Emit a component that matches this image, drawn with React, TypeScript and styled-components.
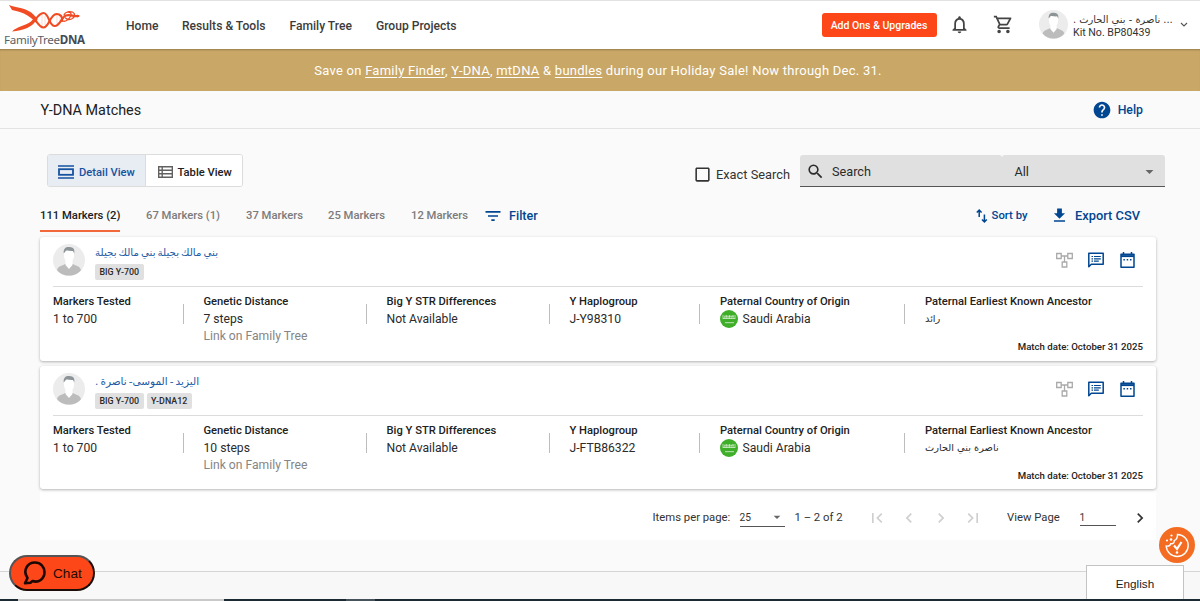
import React from "react";
import styled, { createGlobalStyle } from "styled-components";
import {
  MdNotificationsNone,
  MdOutlineShoppingCart,
  MdHelp,
  MdFilterList,
  MdGetApp,
  MdSearch,
  MdCheckBoxOutlineBlank,
  MdArrowDropDown,
  MdFirstPage,
  MdLastPage,
  MdChevronLeft,
  MdChevronRight,
} from "react-icons/md";

const blue = "#004691";

const GlobalStyle = createGlobalStyle`
  * { box-sizing: border-box; }
  body {
    margin: 0;
    background: #fafafa;
    font-family: Roboto, "DejaVu Sans", sans-serif;
    color: #212121;
    overflow: hidden;
  }
  svg { display: block; flex: none; }
`;

const Page = styled.div`
  height: 601px;
  display: flex;
  flex-direction: column;
  overflow: hidden;
  white-space: nowrap;
`;

const Header = styled.header`
  height: 49px;
  flex: none;
  display: flex;
  align-items: center;
  padding-bottom: 1px;
  background: #fff;
  border-top: 1px solid #e2e2e2;
`;

const Logo = styled.div`
  width: 126px;
  height: 46px;
  padding-left: 4px;
  display: flex;
  flex-direction: column;
`;

const LogoText = styled.div`
  font: 400 11.6px/14px "Noto Sans", sans-serif;
  letter-spacing: -0.3px;
  color: #5a5f66;
  margin-top: -2px;
  b { font-weight: 700; color: #454b55; }
`;

const Nav = styled.nav`
  display: flex;
  flex: 1;
  padding-top: 2px;
`;

const NavItem = styled.a<{ $w: number }>`
  width: ${(p) => p.$w}px;
  font-size: 12.1px;
  font-weight: 500;
  color: #3c3c3c;
`;

const UpgradeButton = styled.button`
  width: 115px;
  height: 24px;
  padding: 1px 0 0;
  border: 0;
  border-radius: 3px;
  background: #fd4719;
  color: #fff;
  font: 500 10.5px Roboto, sans-serif;
`;

const HeaderIcon = styled.span<{ $ml: number }>`
  display: flex;
  margin-left: ${(p) => p.$ml}px;
  color: #444;
`;

const Account = styled.div`
  display: flex;
  align-items: center;
  margin-left: 25px;
  width: 161px;
`;

const AccountText = styled.div`
  width: 98px;
  margin-left: 5px;
  margin-top: 2px;
  font-size: 10.6px;
  line-height: 12px;
  color: #333;
`;

const Arabic = styled.div<{ $size: number; $color?: string; $tight?: number }>`
  direction: rtl;
  width: max-content;
  font-family: "DejaVu Sans", sans-serif;
  font-size: ${(p) => p.$size}px;
  word-spacing: ${(p) => -(p.$tight || 0)}px;
  line-height: 14px;
  color: ${(p) => p.$color || "inherit"};
`;

const Banner = styled.div`
  height: 42px;
  flex: none;
  display: flex;
  align-items: center;
  justify-content: center;
  background: #c9a767;
  box-shadow: inset 0 2px 2px -1px rgba(0, 0, 0, 0.25);
  color: #fff;
  font-size: 13px;
  letter-spacing: 0.25px;
  padding: 0 4px 0 0;
  a { text-decoration: underline; text-underline-offset: 2px; }
`;

const TitleBar = styled.div`
  height: 38px;
  flex: none;
  display: flex;
  align-items: center;
  justify-content: space-between;
  padding: 0 57px 0 40.5px;
  border-bottom: 1px solid #e3e3e3;
`;

const Title = styled.h1`
  margin: 0;
  padding-top: 1px;
  font-size: 14.4px;
  font-weight: 400;
`;

const Help = styled.a`
  display: flex;
  align-items: center;
  gap: 6px;
  font-size: 12.3px;
  font-weight: 500;
  color: ${blue};
`;

const Main = styled.main`
  height: 442px;
  flex: none;
  padding: 26px 44px 0 40px;
`;

const Toolbar = styled.div`
  display: flex;
  align-items: flex-start;
  padding-left: 7px;
`;

const Toggle = styled.div`
  display: flex;
  width: 196px;
  height: 33px;
  margin-top: -1px;
  border: 1px solid #dcdcdc;
  border-radius: 3px;
  overflow: hidden;
`;

const ToggleButton = styled.div<{ $on?: boolean }>`
  width: ${(p) => (p.$on ? 98 : 96)}px;
  display: flex;
  align-items: center;
  gap: 5px;
  padding: 3px 0 0 ${(p) => (p.$on ? 10 : 11.5)}px;
  border-right: ${(p) => (p.$on ? "1px solid #dcdcdc" : "0")};
  background: ${(p) => (p.$on ? "#e8ecf3" : "#fff")};
  color: ${(p) => (p.$on ? "#1553a0" : "#212121")};
  font-size: 11.2px;
  font-weight: 500;
`;

const ExactSearch = styled.label`
  display: flex;
  align-items: center;
  gap: 4px;
  height: 38px;
  margin-left: 450px;
  width: 107px;
  font-size: 12.8px;
  color: #333;
`;

const SearchBox = styled.div`
  display: flex;
  width: 365px;
  height: 32px;
  margin-right: -9px;
  border-bottom: 1px solid #555;
  font-size: 12.7px;
  color: #2b2b2b;
`;

const SearchField = styled.div<{ $w: number }>`
  width: ${(p) => p.$w}px;
  display: flex;
  align-items: center;
  background: #e0e0e0;
  border-radius: 3px 3px 0 0;
  padding: 2px 6px 0 ${(p) => (p.$w > 180 ? 6 : 12.5)}px;
  gap: 7px;
  justify-content: ${(p) => (p.$w > 180 ? "flex-start" : "space-between")};
`;

const TabBar = styled.div`
  display: flex;
  height: 39px;
  margin-bottom: 5px;
  padding-top: 8px;
`;

const Tab = styled.div<{ $w: number; $active?: boolean }>`
  width: ${(p) => p.$w}px;
  height: 31px;
  padding-top: 8px;
  margin-right: 26px;
  font-size: 11.25px;
  line-height: 14px;
  font-weight: 500;
  color: ${(p) => (p.$active ? "#212121" : "#7c7c7c")};
  border-bottom: 2px solid ${(p) => (p.$active ? "#f2693c" : "transparent")};
`;

const Action = styled.div<{ $ml: number; $gap: number; $size: number }>`
  display: flex;
  align-items: center;
  height: 29px;
  gap: ${(p) => p.$gap}px;
  margin-left: ${(p) => p.$ml}px;
  font-size: ${(p) => p.$size}px;
  font-weight: 500;
  color: ${blue};
`;

const TabActions = styled.div`
  display: flex;
  margin-left: auto;
  margin-right: 16px;
`;

const Card = styled.article`
  position: relative;
  height: 124px;
  margin-bottom: 5px;
  padding: 0 13px;
  background: #fff;
  border-radius: 3px;
  box-shadow: 0 1px 3px rgba(0, 0, 0, 0.3);
  &:last-of-type { height: 123px; margin-bottom: 0; }
`;

const CardHead = styled.div`
  display: flex;
  height: 50px;
  padding-top: 7px;
  border-bottom: 1px solid #dcdcdc;
`;

const Person = styled.div`
  flex: 1;
  margin-left: 10px;
  padding-top: 1px;
`;

const Badges = styled.div`
  display: flex;
  gap: 3px;
  margin-top: 5px;
`;

const Badge = styled.span`
  height: 16px;
  padding: 0 4.5px;
  border-radius: 2px;
  background: #e0e0e0;
  font-size: 8.9px;
  line-height: 16px;
  font-weight: 500;
  color: #2a2a2a;
`;

const CardIcons = styled.div`
  display: flex;
  align-items: center;
  gap: 15px;
  height: 32px;
  margin-right: 8px;
`;

const Facts = styled.div`
  display: flex;
  height: 50px;
`;

const Fact = styled.dl<{ $w: number }>`
  width: ${(p) => p.$w}px;
  flex: none;
  margin: 0;
  padding-top: 6px;
  display: flex;
  justify-content: space-between;
`;

const Term = styled.dt`
  font-size: 11.2px;
  line-height: 17px;
  font-weight: 500;
`;

const Value = styled.dd<{ $muted?: boolean }>`
  margin: 0;
  height: ${(p) => (p.$muted ? 16 : 18)}px;
  display: flex;
  align-items: center;
  gap: 4.5px;
  font-size: 12.15px;
  color: ${(p) => (p.$muted ? "#858585" : "#2b2b2b")};
`;

const Separator = styled.i`
  width: 1px;
  height: 20px;
  margin: 11px 20px 0 0;
  background: #bdbdbd;
`;

const MatchDate = styled.div`
  text-align: right;
  font-size: 9.65px;
  line-height: 14px;
  font-weight: 500;
  margin-top: 3px;
`;

const Paginator = styled.div`
  display: flex;
  align-items: center;
  height: 51px;
  padding: 6px 0 0 612.5px;
  background: #fff;
  font-size: 11.3px;
  color: #333;
`;

const Cell = styled.div<{ $w: number }>`
  width: ${(p) => p.$w}px;
  flex: none;
`;

const Field = styled.div<{ $w: number; $h: number }>`
  width: ${(p) => p.$w}px;
  height: ${(p) => p.$h}px;
  flex: none;
  display: flex;
  align-items: center;
  justify-content: space-between;
  border-bottom: 1px solid #555;
  font-size: 10.2px;
`;

const PageButtons = styled.div`
  display: flex;
  gap: 12px;
  width: 140px;
  color: #cfcfcf;
`;

const Footer = styled.footer`
  height: 28px;
  flex: none;
  background: #f8f8f8;
  border-top: 1px solid #d6d6d6;
`;

const Taskbar = styled.div`
  display: flex;
  height: 2px;
  background: #1c2b33;
`;

const TaskSegment = styled.i<{ $w: number; $bg: string }>`
  width: ${(p) => p.$w}px;
  background: ${(p) => p.$bg};
`;

const ChatButton = styled.button`
  position: fixed;
  left: 9px;
  top: 555px;
  width: 86px;
  height: 36px;
  padding: 0 0 0 12px;
  display: flex;
  align-items: center;
  gap: 7px;
  border: 2px solid #1c0d08;
  border-top-color: #555;
  border-left-color: #555;
  border-radius: 18px;
  background: #fd4719;
  color: #260a02;
  font: 13.6px "Liberation Sans", Arial, sans-serif;
`;

const Language = styled.div`
  position: fixed;
  left: 1086px;
  top: 565px;
  width: 98px;
  height: 34px;
  padding-top: 1px;
  display: flex;
  align-items: center;
  justify-content: center;
  background: #fff;
  border: 1px solid #c4c4c4;
  border-bottom: 0;
  font: 11.7px "Liberation Sans", Arial, sans-serif;
`;

const CookieButton = styled.div`
  position: fixed;
  left: 1159px;
  top: 527px;
  width: 36px;
  height: 36px;
  border-radius: 50%;
  background: #f36c21;
`;

const Helix = () => (
  <svg width="82" height="33" viewBox="4 1 82 33">
    <g fill="none" stroke="#f04b23" strokeLinecap="round">
      <path d="M32 14.500c4 4.500 7 12 11.500 12C49 26.500 50 13.500 56.500 13c4 0 6.500 3 5.500 7" strokeWidth="2.100" />
      <path d="M35 19c2.500-3.500 5-7 8.500-7 5.500 0 5 12.500 11 13 5.500.3 6.500-8.500 11.500-10.500 4-1.500 8 1.500 12.500.5" strokeWidth="2.100" />
      <path d="M62.500 20c3 1 6-1.500 8-4.500 1.500-3 0-4.500-2.500-4.500M64 14c1-3 5-4 8.500-3 3 1.500 3 5-1 7-2 .8-4.500.5-6-1" strokeWidth="1.300" />
    </g>
    <path d="M9 4c7 2.800 18 2.500 25 10l3.500 4.500-1.500 3C29 13.500 20 10.500 12 9z" fill="#f04b23" />
    <path d="M12 30.500c5-5 13-5.500 19-10l4.500-5 2 2c-5 9-14 12-25.500 13z" fill="#f04b23" />
    <path d="M42 14v11M45 15v9M57 15v8M60 15v6M77.500 13v4.500" stroke="#f04b23" strokeWidth=".5" opacity=".4" />
  </svg>
);

const Avatar = ({ size }: { size: number }) => (
  <svg width={size} height={size} viewBox="0 0 32 32">
    <circle cx="16" cy="16" r="16" fill="#ececec" />
    <path d="M4 26c1-4 5-4 8-6h8c3 2 7 2 8 6-3 4-7 5.500-12 5.500S7 30 4 26z" fill="#bcbcbc" />
    <path d="M12.500 17h7v4L16 25l-3.500-4z" fill="#fff" />
    <path d="M11 8c0-4 10-4 10 0 .6 5-1 11-5 11s-5.600-6-5-11z" fill="#fff" />
    <path d="M10.800 9.500C10 4 13.500 2.500 16.500 3c4 .2 5.500 2.500 4.700 6.500l-1.200-2.500c-3 .3-5-.7-7-.3z" fill="#8c9498" />
  </svg>
);

const DetailIcon = () => (
  <svg width="16" height="14" viewBox="0 0 16 14" fill="none" stroke="currentColor">
    <path d="M0 1h16M0 13h16" strokeWidth="1.500" />
    <rect x="1" y="4.200" width="14" height="5.600" strokeWidth="1.800" />
  </svg>
);

const TableIcon = () => (
  <svg width="15" height="12" viewBox="0 0 15 12" fill="none" stroke="#616161" strokeWidth="1.400">
    <path d="M.7.7h13.600v10.600H.7zM4.200.7v10.600M.7 4.200h13.600M.7 7.800h13.600" />
  </svg>
);

const SortIcon = () => (
  <svg width="12" height="14" viewBox="0 0 12 14" fill="none" stroke="currentColor" strokeWidth="1.500">
    <path d="M3.200 8V1.200M.8 3.500l2.400-2.400 2.400 2.400M8.400 5.500v7.300M6 10.500l2.400 2.400 2.400-2.400" />
  </svg>
);

const TreeIcon = () => (
  <svg width="17" height="16" viewBox="0 0 17 16" fill="none" stroke="#aaa" strokeWidth="1.300">
    <path d="M.7 1.500h4.500v5H.7zM11.800 1.500h4.500v5h-4.500zM6.200 10h4.600v5H6.200zM5.200 4h6.600M8.500 4v6" />
  </svg>
);

const NotesIcon = () => (
  <svg width="17" height="16" viewBox="0 0 17 16" fill="none" stroke={blue} strokeWidth="1.500">
    <path d="M.8 14.800V1.200h14.400v11H3.300z" strokeLinejoin="round" />
    <path d="M3.500 4.500H5M3.500 6.800H5M3.500 9.100H5M6 4.500h6.800M6 6.800h6.800M6 9.100h4.800" strokeWidth="1.200" />
  </svg>
);

const CalendarIcon = () => (
  <svg width="15" height="17" viewBox="0 0 15 17" fill="none" stroke={blue} strokeWidth="1.500">
    <path d="M1 2.300h13v12.900H1z" strokeLinejoin="round" />
    <path d="M3.500 0v2.500M11.500 0v2.500M3.400 7.800h1.500M6.700 7.800h1.500M10 7.800h1.500" />
    <path d="M1 4.100h13" strokeWidth="2" />
  </svg>
);

const SaudiFlag = () => (
  <svg width="18" height="18" viewBox="0 0 18 18">
    <circle cx="9" cy="9" r="9" fill="#3fae29" />
    <path d="M3 5v4M4.800 6.500V9M6.300 5v4M8 6.500V9M9.500 5v4M11.200 6V9M13 5v4M15 5v4M3 8.500h12M4 6.200h10" stroke="#fff" strokeWidth=".8" opacity=".75" />
    <path d="M5 12.700h9" stroke="#fff" strokeWidth=".8" opacity=".85" />
  </svg>
);

const ChatIcon = () => (
  <svg width="23" height="24" viewBox="0 0 23 24" fill="none" stroke="#1c0703" strokeWidth="2.600" strokeLinejoin="round">
    <path d="M4.500 17C-.5 10 4 1.500 12 1.500c5.500 0 9.500 4.500 9.500 9.600 0 7-6 11-12 9l-2 1.700-5.500.4z" />
  </svg>
);

const CookieIcon = () => (
  <svg width="36" height="36" viewBox="0 0 36 36" fill="none" stroke="#fff" strokeWidth="1.400">
    <path d="M18.500 7.500a11 11 0 1 1-11.300 11.500c2 .3 4-.5 4.500-2.300 2.500.4 3.800-1 3.500-3 2.500-1 3.300-3.500 3.300-6.200z" />
    <path d="M15 18.500l3 3.500 4.500-7" strokeWidth="2.200" />
    <g fill="#fff" stroke="none">
      <circle cx="12.500" cy="8.500" r="1.100" /><circle cx="8" cy="13.500" r="1.100" />
      <circle cx="12" cy="12.500" r="1.300" /><circle cx="18" cy="25.500" r="1.300" />
    </g>
  </svg>
);

type Match = { name: string; nameSize: number; badges: string[]; steps: string; haplogroup: string; ancestor: string };

const matches: Match[] = [
  { name: "بني مالك بجيلة بني مالك بجيلة", nameSize: 10.3, badges: ["BIG Y-700"], steps: "7 steps", haplogroup: "J-Y98310", ancestor: "رائد" },
  { name: "اليزيد - الموسى- ناصرة .", nameSize: 10.5, badges: ["BIG Y-700", "Y-DNA12"], steps: "10 steps", haplogroup: "J-FTB86322", ancestor: "ناصرة بني الحارث" },
];

const Item = ({ w, label, last, children }: { w: number; label: string; last?: boolean; children: React.ReactNode }) => (
  <Fact $w={w}>
    <div>
      <Term>{label}</Term>
      {children}
    </div>
    {!last && <Separator />}
  </Fact>
);

const MatchCard = ({ m }: { m: Match }) => (
  <Card>
    <CardHead>
      <Avatar size={32} />
      <Person>
        <Arabic $size={m.nameSize} $tight={1.3} $color="#1d5ba6">{m.name}</Arabic>
        <Badges>{m.badges.map((b) => <Badge key={b}>{b}</Badge>)}</Badges>
      </Person>
      <CardIcons><TreeIcon /><NotesIcon /><CalendarIcon /></CardIcons>
    </CardHead>
    <Facts>
      <Item w={150.500} label="Markers Tested"><Value>1 to 700</Value></Item>
      <Item w={183} label="Genetic Distance">
        <Value>{m.steps}</Value>
        <Value $muted>Link on Family Tree</Value>
      </Item>
      <Item w={183} label="Big Y STR Differences"><Value>Not Available</Value></Item>
      <Item w={150.500} label="Y Haplogroup"><Value>{m.haplogroup}</Value></Item>
      <Item w={205} label="Paternal Country of Origin"><Value><SaudiFlag />Saudi Arabia</Value></Item>
      <Item w={218} label="Paternal Earliest Known Ancestor" last>
        <Value><Arabic $size={9.8}>{m.ancestor}</Arabic></Value>
      </Item>
    </Facts>
    <MatchDate>Match date: October 31 2025</MatchDate>
  </Card>
);

export default function App() {
  return (
    <Page>
      <GlobalStyle />
      <Header>
        <Logo>
          <Helix />
          <LogoText>FamilyTree<b>DNA</b></LogoText>
        </Logo>
        <Nav>
          <NavItem $w={56}>Home</NavItem>
          <NavItem $w={107.500}>Results &amp; Tools</NavItem>
          <NavItem $w={86.500}>Family Tree</NavItem>
          <NavItem $w={90}>Group Projects</NavItem>
        </Nav>
        <UpgradeButton>Add Ons &amp; Upgrades</UpgradeButton>
        <HeaderIcon $ml={12}><MdNotificationsNone size={21} /></HeaderIcon>
        <HeaderIcon $ml={23.500}><MdOutlineShoppingCart size={21} /></HeaderIcon>
        <Account>
          <Avatar size={29} />
          <AccountText>
            <Arabic $size={9.9}>... ناصرة - بني الحارث .</Arabic>
            Kit No. BP80439
          </AccountText>
          <svg width="8" height="6" viewBox="0 0 8 6" style={{ marginLeft: 9 }} fill="none" stroke="#555" strokeWidth="1.100">
            <path d="M1 1l3 3 3-3" />
          </svg>
        </Account>
      </Header>
      <Banner>
        <span>
          Save on <a>Family Finder</a>, <a>Y-DNA</a>, <a>mtDNA</a> &amp; <a>bundles</a> during our Holiday Sale! Now through Dec. 31.
        </span>
      </Banner>
      <TitleBar>
        <Title>Y-DNA Matches</Title>
        <Help><MdHelp size={20} />Help</Help>
      </TitleBar>
      <Main>
        <Toolbar>
          <Toggle>
            <ToggleButton $on><DetailIcon />Detail View</ToggleButton>
            <ToggleButton><TableIcon />Table View</ToggleButton>
          </Toggle>
          <ExactSearch><MdCheckBoxOutlineBlank size={19} />Exact Search</ExactSearch>
          <SearchBox>
            <SearchField $w={202}><MdSearch size={19} />Search</SearchField>
            <SearchField $w={163}>All<MdArrowDropDown size={19} color="#666" /></SearchField>
          </SearchBox>
        </Toolbar>
        <TabBar>
          <Tab $w={80} $active>111 Markers (2)</Tab>
          <Tab $w={74}>67 Markers (1)</Tab>
          <Tab $w={56}>37 Markers</Tab>
          <Tab $w={57}>25 Markers</Tab>
          <Tab $w={48}>12 Markers</Tab>
          <Action $ml={-2} $gap={6} $size={12.6}><MdFilterList size={20} />Filter</Action>
          <TabActions>
            <Action $ml={0} $gap={4} $size={11.3}><SortIcon />Sort by</Action>
            <Action $ml={22} $gap={6.5} $size={12.85}><MdGetApp size={19} />Export CSV</Action>
          </TabActions>
        </TabBar>
        {matches.map((m) => <MatchCard key={m.haplogroup} m={m} />)}
        <Paginator>
          <Cell $w={87}>Items per page:</Cell>
          <Field $w={45} $h={18}>25<MdArrowDropDown size={16} color="#666" /></Field>
          <Cell $w={10} />
          <Cell $w={72.500}>1 – 2 of 2</Cell>
          <PageButtons>
            <MdFirstPage size={20} /><MdChevronLeft size={20} /><MdChevronRight size={20} /><MdLastPage size={20} />
          </PageButtons>
          <Cell $w={72.500}>View Page</Cell>
          <Field $w={36} $h={16}>1</Field>
          <Cell $w={14} />
          <MdChevronRight size={20} />
        </Paginator>
      </Main>
      <Footer />
      <Taskbar>
        <TaskSegment $w={18} $bg="#1c2b33" />
        <TaskSegment $w={206} $bg="#c9c9c9" />
        <TaskSegment $w={122} $bg="#1c2b33" />
        <TaskSegment $w={29} $bg="#46535a" />
      </Taskbar>
      <ChatButton><ChatIcon />Chat</ChatButton>
      <Language>English</Language>
      <CookieButton><CookieIcon /></CookieButton>
    </Page>
  );
}
